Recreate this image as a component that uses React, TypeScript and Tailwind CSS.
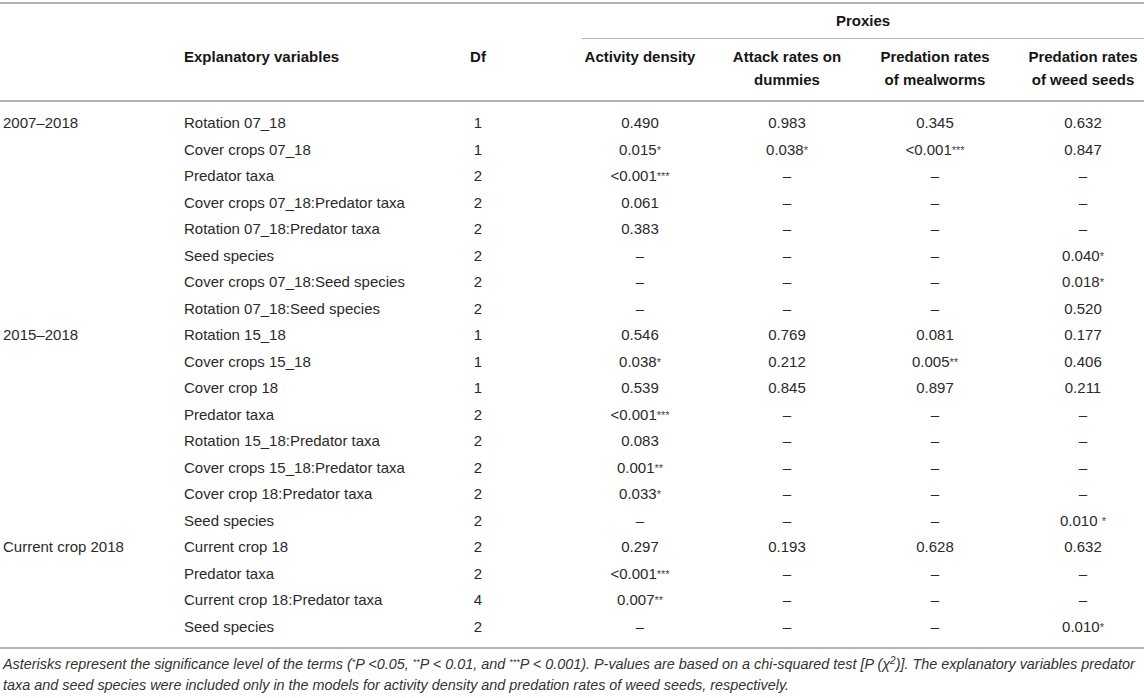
import React from 'react';

type Row = {
    group?: string;
    label: string;
    df: string;
    values: string[];
};

const rows: Row[] = [
    { group: '2007–2018', label: 'Rotation 07_18', df: '1', values: ['0.490', '0.983', '0.345', '0.632'] },
    { label: 'Cover crops 07_18', df: '1', values: ['0.015*', '0.038*', '<0.001***', '0.847'] },
    { label: 'Predator taxa', df: '2', values: ['<0.001***', '–', '–', '–'] },
    { label: 'Cover crops 07_18:Predator taxa', df: '2', values: ['0.061', '–', '–', '–'] },
    { label: 'Rotation 07_18:Predator taxa', df: '2', values: ['0.383', '–', '–', '–'] },
    { label: 'Seed species', df: '2', values: ['–', '–', '–', '0.040*'] },
    { label: 'Cover crops 07_18:Seed species', df: '2', values: ['–', '–', '–', '0.018*'] },
    { label: 'Rotation 07_18:Seed species', df: '2', values: ['–', '–', '–', '0.520'] },
    { group: '2015–2018', label: 'Rotation 15_18', df: '1', values: ['0.546', '0.769', '0.081', '0.177'] },
    { label: 'Cover crops 15_18', df: '1', values: ['0.038*', '0.212', '0.005**', '0.406'] },
    { label: 'Cover crop 18', df: '1', values: ['0.539', '0.845', '0.897', '0.211'] },
    { label: 'Predator taxa', df: '2', values: ['<0.001***', '–', '–', '–'] },
    { label: 'Rotation 15_18:Predator taxa', df: '2', values: ['0.083', '–', '–', '–'] },
    { label: 'Cover crops 15_18:Predator taxa', df: '2', values: ['0.001**', '–', '–', '–'] },
    { label: 'Cover crop 18:Predator taxa', df: '2', values: ['0.033*', '–', '–', '–'] },
    { label: 'Seed species', df: '2', values: ['–', '–', '–', '0.010 *'] },
    { group: 'Current crop 2018', label: 'Current crop 18', df: '2', values: ['0.297', '0.193', '0.628', '0.632'] },
    { label: 'Predator taxa', df: '2', values: ['<0.001***', '–', '–', '–'] },
    { label: 'Current crop 18:Predator taxa', df: '4', values: ['0.007**', '–', '–', '–'] },
    { label: 'Seed species', df: '2', values: ['–', '–', '–', '0.010*'] },
];

// split trailing asterisks off so they can sit as superscript
const Value = ({ text }: { text: string }) => {
    const m = text.match(/^(.*?)(\*+)$/);
    if (!m) return <>{text}</>;
    return (
        <>
            {m[1]}
            <sup className="text-[11px] relative -top-[1px] text-[#444]">{m[2]}</sup>
        </>
    );
};

const grid = 'grid grid-cols-[184px_236px_146px_148px_146px_150px_134px]';
const valueCell = ['text-center', 'text-center', 'text-center', 'text-center pl-[12px]'];

export default function App() {
    return (
        <div
            className="w-[1144px] h-[698px] bg-white text-[#2a2a2a] overflow-hidden"
            style={{ fontFamily: '"Liberation Sans", Arial, sans-serif' }}
        >
            <div className="pt-[2px]">
                <div className="border-t-2 border-[#b4b4b4]">
                    {/* Header */}
                    <div className={grid}>
                        <div className="col-start-4 col-span-4 pl-[16px]">
                            <div className="h-[35px] border-b border-[#b4b4b4] flex items-center justify-center text-[15px] font-bold text-[#161616]">
                                Proxies
                            </div>
                        </div>
                    </div>
                    <div className={`${grid} border-b-2 border-[#b4b4b4] text-[15px] font-bold leading-[23px] text-[#161616] pt-[6px] pb-[9px]`}>
                        <div />
                        <div>Explanatory variables</div>
                        <div className="text-center pr-[30px]">Df</div>
                        <div className="text-center">Activity density</div>
                        <div className="text-center">Attack rates on<br />dummies</div>
                        <div className="text-center">Predation rates<br />of mealworms</div>
                        <div className="text-center pl-[12px]">Predation rates<br />of weed seeds</div>
                    </div>

                    {/* Body */}
                    <div className="border-b-2 border-[#b4b4b4] pt-[8px] pb-[7px] text-[15px]">
                        {rows.map((r, i) => (
                            <div key={i} className={`${grid} h-[26.5px] items-center`}>
                                <div className="pl-[3px] whitespace-nowrap">{r.group ?? ''}</div>
                                <div className="whitespace-nowrap">{r.label}</div>
                                <div className="text-center pr-[30px]">{r.df}</div>
                                {r.values.map((v, j) => (
                                    <div key={j} className={`${valueCell[j]} whitespace-nowrap`}>
                                        <Value text={v} />
                                    </div>
                                ))}
                            </div>
                        ))}
                    </div>

                    {/* Footnote */}
                    <div className="pl-[3px] pt-[5px] italic text-[14.4px] leading-[21px] text-[#333] whitespace-nowrap">
                        Asterisks represent the significance level of the terms (<sup className="text-[9px]">*</sup>P &lt;0.05, <sup className="text-[9px]">**</sup>P &lt; 0.01, and <sup className="text-[9px]">***</sup>P &lt; 0.001). P-values are based on a chi-squared test [P (χ<sup className="text-[10px]">2</sup>)]. The explanatory variables predator
                        <br />
                        taxa and seed species were included only in the models for activity density and predation rates of weed seeds, respectively.
                    </div>
                </div>
            </div>
        </div>
    );
}
